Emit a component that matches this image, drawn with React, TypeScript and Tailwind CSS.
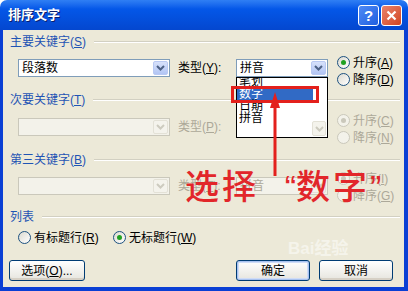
import React from "react"

const FONT = "font-['Liberation_Sans','Noto_Sans_CJK_SC',sans-serif]"

function Key({ k }: { k: string }) {
  return (
    <span>
      (<span className="underline underline-offset-1">{k}</span>)
    </span>
  )
}

function GroupHeader({ label, k }: { label: string; k?: string }) {
  return (
    <div className="flex h-3 items-center gap-2 pl-[2px] text-[12px] leading-3 text-[#1f54b4]">
      <span className="shrink-0">
        {label}
        {k && <Key k={k} />}
      </span>
      <div className="h-[2px] flex-1 border-t border-b border-t-[#d2d0c2] border-b-white" />
    </div>
  )
}

function Chevron({ color }: { color: string }) {
  return (
    <svg width="9" height="6" viewBox="0 0 9 6">
      <path d="M1 1 L4.5 4.5 L8 1" fill="none" stroke={color} strokeWidth="2" />
    </svg>
  )
}

function Combo({ value, width, disabled }: { value?: string; width: number; disabled?: boolean }) {
  return (
    <div
      className={`flex h-[18px] items-center border ${
        disabled ? "border-[#cac8bb] bg-[#f3f2ea] text-[#aca899]" : "border-[#7f9db9] bg-white text-black"
      }`}
      style={{ width }}
    >
      <span className="flex-1 pl-[3px] text-[12px] leading-3">{value}</span>
      <div
        className={`mr-[1px] flex h-[14px] w-[15px] items-center justify-center rounded-[2px] ${
          disabled ? "border border-[#e3e1d6] bg-[#f4f3ec]" : "border border-[#b9c9f3] bg-linear-to-b from-[#d7e1fb] to-[#b2c5f4]"
        }`}
      >
        <Chevron color={disabled ? "#cdcbbf" : "#4d6185"} />
      </div>
    </div>
  )
}

function Radio({ label, k, checked, disabled }: { label: string; k: string; checked?: boolean; disabled?: boolean }) {
  return (
    <div className={`flex h-[17px] items-center gap-[3px] text-[12px] leading-3 ${disabled ? "text-[#aca899]" : "text-black"}`}>
      <span
        className={`flex h-[13px] w-[13px] items-center justify-center rounded-full border ${
          disabled ? "border-[#cac8bb] bg-[#f3f2ea]" : "border-[#1c5180] bg-linear-to-br from-[#dcdad0] to-white"
        }`}
      >
        {checked && <span className={`h-[5px] w-[5px] rounded-full ${disabled ? "bg-[#cac8bb]" : "bg-[#21a121]"}`} />}
      </span>
      <span>
        {label}
        <Key k={k} />
      </span>
    </div>
  )
}

function KeyRow({
  value,
  typeLabel,
  typeKey,
  typeValue,
  disabled,
  radios,
  comboTop,
}: {
  value?: string
  typeLabel: string
  typeKey: string
  typeValue?: string
  disabled?: boolean
  radios: { label: string; k: string; checked?: boolean }[]
  comboTop: string
}) {
  return (
    <div className="flex items-start pl-[10px]">
      <div className={`flex items-center ${comboTop}`}>
        <Combo value={value} width={152} disabled={disabled} />
        <span className={`ml-[8px] w-[58px] text-[12px] leading-3 ${disabled ? "text-[#aca899]" : "text-black"}`}>
          {typeLabel}
          <Key k={typeKey} />:
        </span>
        <Combo value={typeValue} width={92} disabled={disabled} />
      </div>
      <div className="ml-[9px] flex flex-col">
        {radios.map((r) => (
          <Radio key={r.k} label={r.label} k={r.k} checked={r.checked} disabled={disabled} />
        ))}
      </div>
    </div>
  )
}

function Btn({ children, w, primary }: { children: React.ReactNode; w: number; primary?: boolean }) {
  return (
    <div
      className="flex h-[21px] items-center justify-center rounded-[3px] border border-[#003c74] bg-linear-to-b from-white to-[#e6e5de] text-[12px] leading-3 text-black"
      style={{ width: w, boxShadow: primary ? "inset 0 0 0 1px #a8c2f0, inset 0 0 0 2px #cfdcf6" : "inset 0 -2px 0 #d6d0c5" }}
    >
      {children}
    </div>
  )
}

export default function App() {
  return (
    <div className={`relative h-[291px] w-[408px] overflow-hidden bg-white ${FONT}`}>
      <div className="flex h-full flex-col">
        {/* Title bar */}
        <div className="flex h-[30px] items-center rounded-t-[7px] bg-linear-to-b from-[#2f7ff4] via-[#0457e8] via-30% to-[#0447cf] pl-[8px] pr-[6px]">
          <span className="text-[13px] font-bold leading-4 text-white [text-shadow:1px_1px_0_#0a1e6e]">排序文字</span>
          <div className="ml-auto flex gap-[2px]">
            <div className="flex h-[21px] w-[21px] items-center justify-center rounded-[3px] border border-white bg-linear-to-br from-[#4e8af5] to-[#1f5ee0] text-[15px] font-bold leading-none text-white">
              ?
            </div>
            <div className="flex h-[21px] w-[21px] items-center justify-center rounded-[3px] border border-white bg-linear-to-br from-[#e9826a] to-[#d2431c]">
              <svg width="11" height="11" viewBox="0 0 11 11">
                <path d="M1.5 1.5 L9.5 9.5 M9.5 1.5 L1.5 9.5" stroke="white" strokeWidth="2.2" />
              </svg>
            </div>
          </div>
        </div>

        {/* Body */}
        <div className="flex flex-1 flex-col border-b-[4px] border-l-[3px] border-r-[4px] border-[#0a3fd4] bg-[#ece9d8] pl-[5px] pr-[4px]">
          <div className="mt-[6px]">
            <GroupHeader label="主要关键字" k="S" />
          </div>
          <div className="mt-[6px]">
            <KeyRow
              value="段落数"
              typeLabel="类型"
              typeKey="Y"
              typeValue="拼音"
              comboTop="mt-[5px]"
              radios={[
                { label: "升序", k: "A", checked: true },
                { label: "降序", k: "D" },
              ]}
            />
          </div>

          <div className="mt-[6px]">
            <GroupHeader label="次要关键字" k="T" />
          </div>
          <div className="mt-[6px]">
            <KeyRow
              disabled
              typeLabel="类型"
              typeKey="P"
              comboTop="mt-[6px]"
              radios={[
                { label: "升序", k: "C", checked: true },
                { label: "降序", k: "N" },
              ]}
            />
          </div>

          <div className="mt-[8px]">
            <GroupHeader label="第三关键字" k="B" />
          </div>
          <div className="mt-[4px]">
            <KeyRow
              disabled
              typeLabel="类型"
              typeKey="T"
              typeValue="拼音"
              comboTop="mt-[7px]"
              radios={[
                { label: "升序", k: "I", checked: true },
                { label: "降序", k: "G" },
              ]}
            />
          </div>

          <div className="mt-[7px]">
            <GroupHeader label="列表" />
          </div>
          <div className="mt-[6px] flex pl-[10px]">
            <div className="w-[95px]">
              <Radio label="有标题行" k="R" />
            </div>
            <Radio label="无标题行" k="W" checked />
          </div>

          <div className="mt-[14px] flex items-center pl-[1px] pr-[7px]">
            <Btn w={76}>
              选项<Key k="O" />...
            </Btn>
            <div className="flex-1" />
            <Btn w={74} primary>
              确定
            </Btn>
            <div className="w-[9px]" />
            <Btn w={74}>取消</Btn>
          </div>
        </div>
      </div>

      {/* Faint watermark */}
      <div className="absolute left-[288px] top-[240px] text-[17px] font-bold leading-none text-white opacity-50">Bai经验</div>

      {/* Open dropdown list */}
      <div className="absolute left-[236px] top-[77px] h-[61px] w-[92px] overflow-hidden border border-black bg-white text-[12px] leading-3">
        <div className="-mt-[2px] flex flex-col">
          <div className="h-[12px] pl-[2px] text-black">笔划</div>
          <div className="h-[12px] w-[76px] bg-[#316ac5] pl-[2px] text-white">数字</div>
          <div className="h-[12px] pl-[2px] text-black">日期</div>
          <div className="h-[12px] pl-[2px] text-black">拼音</div>
        </div>
        <div className="absolute right-[1px] top-[43px] flex h-[15px] w-[14px] items-center justify-center rounded-[2px] border border-[#e3e1d6] bg-[#f4f3ec]">
          <Chevron color="#cdcbbf" />
        </div>
      </div>

      {/* Red highlight box */}
      <div className="absolute left-[231px] top-[86px] h-[17px] w-[88px] border-[3px] border-[#e3201c]" />

      {/* Red arrow */}
      <svg className="absolute left-[267px] top-[91px]" width="16" height="86" viewBox="0 0 16 86">
        <polygon points="8,1 3,17 13,17" fill="#e3201c" />
        <rect x="6.5" y="15" width="3" height="70" fill="#e3201c" />
      </svg>

      {/* Annotation */}
      <div className="absolute left-[185px] top-[168px] flex text-[34px] font-medium leading-[38px] text-[#e2262a]">
        <span className="w-[37px]">选</span>
        <span className="w-[37px]">择</span>
        <span className="flex w-[37px] justify-end">“</span>
        <span className="w-[37px]">数</span>
        <span className="w-[37px]">字</span>
        <span className="flex w-[37px] justify-start">”</span>
      </div>
    </div>
  )
}
